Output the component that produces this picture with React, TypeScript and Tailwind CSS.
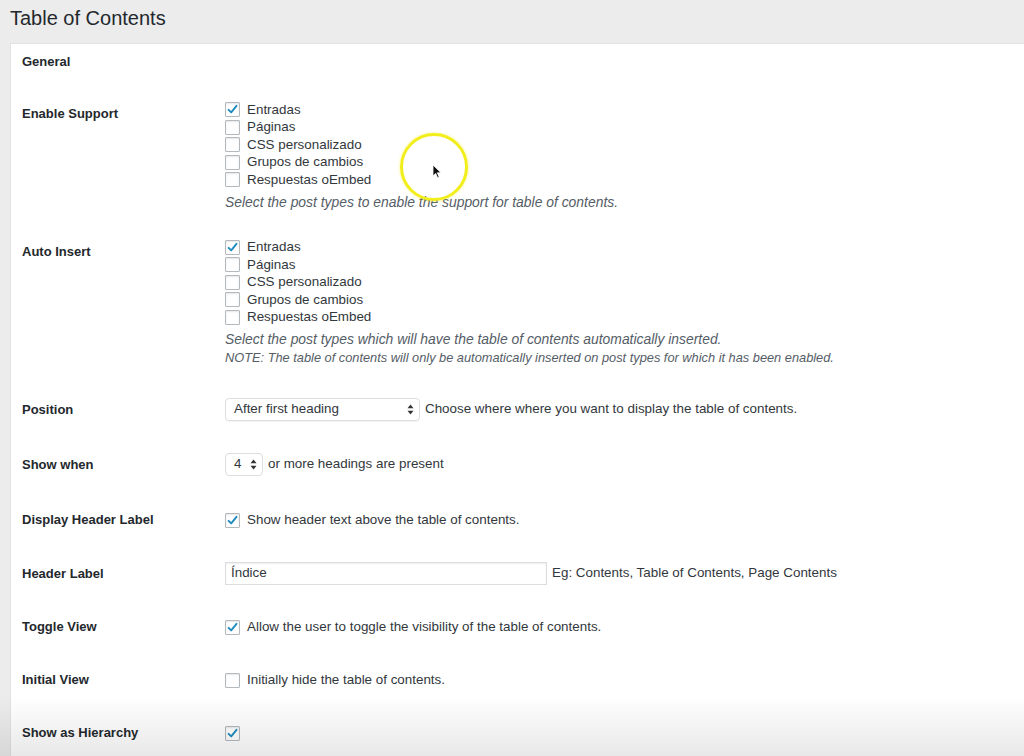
import React from "react";

const font = { fontFamily: '"Liberation Sans", Arial, sans-serif' };

function Check({ on }: { on?: boolean }) {
   return (
      <span className="inline-flex items-center justify-center w-[15px] h-[15px] border border-[#b4b9be] bg-white rounded-[1px] shadow-[inset_0_1px_2px_rgba(0,0,0,0.1)] shrink-0">
         {on && (
            <svg width="11" height="11" viewBox="0 0 11 11">
               <path d="M1.6 5.8l2.6 2.6 5.3-6.6" fill="none" stroke="#1e8cbe" strokeWidth="1.9" strokeLinecap="round" strokeLinejoin="round" />
            </svg>
         )}
      </span>
   );
}

function Arrows() {
   return (
      <svg width="7" height="11" viewBox="0 0 7 11">
         <path d="M3.5 0.5L6.5 4.2H0.5z" fill="#333" />
         <path d="M3.5 10.5L6.5 6.8H0.5z" fill="#333" />
      </svg>
   );
}

function CheckList({ items, checked }: { items: string[]; checked: number[] }) {
   return (
      <div className="flex flex-col">
         {items.map((t, i) => (
            <label key={t} className="flex items-center gap-[7px] h-[17.5px] text-[13.4px] text-[#32373c]">
               <Check on={checked.includes(i)} />
               <span>{t}</span>
            </label>
         ))}
      </div>
   );
}

function Row({ label, mt, children, labelPt = "pt-0" }: { label: string; mt: string; children: React.ReactNode; labelPt?: string }) {
   return (
      <div className={`flex ${mt}`}>
         <div className={`w-[203px] shrink-0 font-bold text-[13px] text-[#23282d] leading-[18px] ${labelPt}`}>{label}</div>
         <div className="flex-1">{children}</div>
      </div>
   );
}

const types = ["Entradas", "Páginas", "CSS personalizado", "Grupos de cambios", "Respuestas oEmbed"];

export default function App() {
   return (
      <div className="relative w-[1024px] h-[756px] overflow-hidden bg-[#ececec]" style={font}>
         <h1 className="h-[43px] pl-[10px] pt-[5px] text-[20px] leading-[26px] text-[#23282d]">Table of Contents</h1>
         <div className="ml-[10px] h-[713px] bg-white border-l border-t border-[#e2e2e2] pl-[11px]">
            <div className="pt-[9px] font-bold text-[13px] leading-[18px] text-[#23282d]">General</div>

            <Row label="Enable Support" mt="mt-[30px]" labelPt="pt-[4px]">
               <CheckList items={types} checked={[0]} />
               <p className="mt-[4px] leading-[18px] text-[13.9px] italic text-[#555d66]">Select the post types to enable the support for table of contents.</p>
            </Row>

            <Row label="Auto Insert" mt="mt-[28px]" labelPt="pt-[4px]">
               <CheckList items={types} checked={[0]} />
               <p className="mt-[4px] leading-[18px] text-[13.9px] italic text-[#555d66]">Select the post types which will have the table of contents automatically inserted.</p>
               <p className="mt-[2px] leading-[16px] text-[12.8px] italic text-[#555d66]">NOTE: The table of contents will only be automatically inserted on post types for which it has been enabled.</p>
            </Row>

            <Row label="Position" mt="mt-[32px]" labelPt="pt-[3px]">
               <div className="flex items-center gap-[5px] text-[13.4px] text-[#32373c]">
                  <div className="w-[195px] h-[23px] border border-[#ddd] rounded-[4px] flex items-center justify-between pl-[8px] pr-[5px] shadow-[0_1px_1px_rgba(0,0,0,0.04)]">
                     <span>After first heading</span>
                     <Arrows />
                  </div>
                  <span>Choose where where you want to display the table of contents.</span>
               </div>
            </Row>

            <Row label="Show when" mt="mt-[32px]" labelPt="pt-[3px]">
               <div className="flex items-center gap-[5px] text-[13.4px] text-[#32373c]">
                  <div className="w-[38px] h-[23px] border border-[#ddd] rounded-[4px] flex items-center justify-between pl-[8px] pr-[5px]">
                     <span>4</span>
                     <Arrows />
                  </div>
                  <span>or more headings are present</span>
               </div>
            </Row>

            <Row label="Display Header Label" mt="mt-[35px]">
               <label className="flex items-center gap-[7px] h-[18px] text-[13.4px] text-[#32373c]">
                  <Check on />
                  <span>Show header text above the table of contents.</span>
               </label>
            </Row>

            <Row label="Header Label" mt="mt-[33px]" labelPt="pt-[3px]">
               <div className="flex items-center gap-[5px] text-[13.4px] text-[#32373c]">
                  <div className="w-[322px] h-[23px] border border-[#ddd] flex items-center pl-[5px] shadow-[inset_0_1px_2px_rgba(0,0,0,0.07)]">Índice</div>
                  <span>Eg: Contents, Table of Contents, Page Contents</span>
               </div>
            </Row>

            <Row label="Toggle View" mt="mt-[33px]">
               <label className="flex items-center gap-[7px] h-[18px] text-[13.4px] text-[#32373c]">
                  <Check on />
                  <span>Allow the user to toggle the visibility of the table of contents.</span>
               </label>
            </Row>

            <Row label="Initial View" mt="mt-[35px]">
               <label className="flex items-center gap-[7px] h-[18px] text-[13.4px] text-[#32373c]">
                  <Check />
                  <span>Initially hide the table of contents.</span>
               </label>
            </Row>

            <Row label="Show as Hierarchy" mt="mt-[35px]">
               <label className="flex items-center gap-[7px] h-[18px] text-[13.4px] text-[#32373c]">
                  <Check on />
               </label>
            </Row>
         </div>

         {/* bottom vignette */}
         <div className="pointer-events-none absolute left-0 right-0 bottom-0 h-[60px] bg-gradient-to-b from-transparent to-[rgba(0,0,0,0.09)]" />

         {/* cursor highlight */}
         <div className="pointer-events-none absolute left-[400px] top-[133px] w-[68px] h-[68px] rounded-full border-[3px] border-[#f2ee1b] shadow-[0_0_3px_rgba(240,235,30,0.6)]" />
         <svg className="pointer-events-none absolute left-[432px] top-[164px]" width="10" height="15" viewBox="0 0 10 15">
            <path d="M1 1v11l2.7-2.6 1.9 4.3 1.6-.7-1.9-4.2H9z" fill="#111" stroke="#fff" strokeWidth="0.8" />
         </svg>
      </div>
   );
}
